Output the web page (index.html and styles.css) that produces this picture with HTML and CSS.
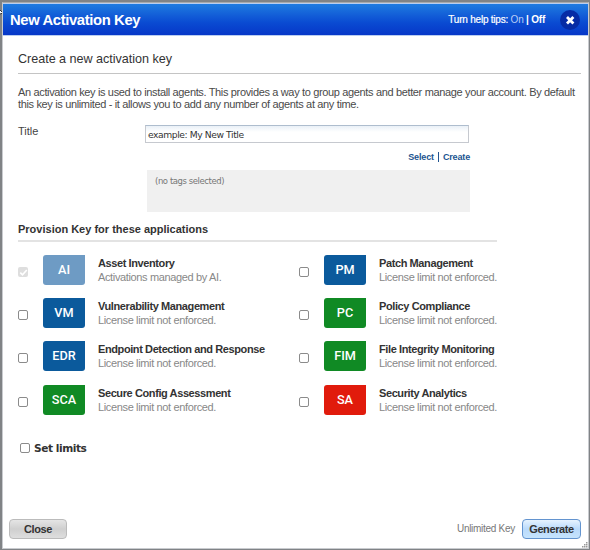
FILE: index.html
```
<!DOCTYPE html>
<html lang="en">
<head>
<meta charset="utf-8">
<title>New Activation Key</title>
<link rel="stylesheet" href="styles.css">
</head>
<body>
<svg class="cursor" width="4" height="12" viewBox="0 0 4 12"><path d="M0 2L3 5L0 6" fill="#fff" stroke="#333" stroke-width="1"/></svg>
<main class="dialog">
  <header class="bar">
    <h1>New Activation Key</h1>
    <div class="tips"><span class="tips-label">Turn help tips:</span> <span class="on">On</span> <b>|</b> <b>Off</b></div>
    <svg class="x" width="20" height="20" viewBox="0 0 20 20"><circle cx="10" cy="10" r="10" fill="#062ba5"/><path d="M7 7L13.4 13.4M13.4 7L7 13.4" stroke="#fff" stroke-width="2.8"/></svg>
  </header>
  <section class="content">
    <h2>Create a new activation key</h2>
    <p class="intro">An activation key is used to install agents. This provides a way to group agents and better manage your account. By default<br>this key is unlimited - it allows you to add any number of agents at any time.</p>
    <div class="field">
      <label>Title</label>
      <div class="controls">
        <div class="input">example: My New Title</div>
        <div class="links"><span>Select</span><i></i><span>Create</span></div>
        <div class="tags">(no tags selected)</div>
      </div>
    </div>
    <h3>Provision Key for these applications</h3>
    <div class="apps">
      <div class="app"><span class="box off"><svg width="11" height="11" viewBox="0 0 11 11"><path d="M2.3 5.6L4.5 7.8L8.8 3" fill="none" stroke="#fff" stroke-width="1.6"/></svg></span><span class="badge pale">AI</span><div><b>Asset Inventory</b><p>Activations managed by AI.</p></div></div>
      <div class="app"><span class="box"></span><span class="badge">PM</span><div><b>Patch Management</b><p>License limit not enforced.</p></div></div>
      <div class="app"><span class="box"></span><span class="badge">VM</span><div><b>Vulnerability Management</b><p>License limit not enforced.</p></div></div>
      <div class="app"><span class="box"></span><span class="badge green">PC</span><div><b>Policy Compliance</b><p>License limit not enforced.</p></div></div>
      <div class="app"><span class="box"></span><span class="badge">EDR</span><div><b>Endpoint Detection and Response</b><p>License limit not enforced.</p></div></div>
      <div class="app"><span class="box"></span><span class="badge green">FIM</span><div><b>File Integrity Monitoring</b><p>License limit not enforced.</p></div></div>
      <div class="app"><span class="box"></span><span class="badge green">SCA</span><div><b>Secure Config Assessment</b><p>License limit not enforced.</p></div></div>
      <div class="app"><span class="box"></span><span class="badge red">SA</span><div><b>Security Analytics</b><p>License limit not enforced.</p></div></div>
    </div>
    <div class="limits"><span class="box"></span><b>Set limits</b></div>
  </section>
  <footer>
    <span class="btn">Close</span>
    <span class="note">Unlimited Key</span>
    <span class="btn primary">Generate</span>
  </footer>
  <svg class="grip" width="6" height="6" viewBox="0 0 6 6" fill="#999"><path d="M4 0h1.5v1.5H4zM2 2h1.5v1.5H2zM4 2h1.5v1.5H4zM0 4h1.5v1.5H0zM2 4h1.5v1.5H2zM4 4h1.5v1.5H4z"/></svg>
</main>
</body>
</html>
```
FILE: styles.css
```
* { box-sizing: border-box; }
body { margin: 0; width: 590px; height: 550px; padding: 2px 1px 1px 2px; background: #808386; font-family: "Liberation Sans", Arial, sans-serif; color: #444; overflow: hidden; }
h1, h2, h3, p { margin: 0; white-space: nowrap; }
.cursor { position: absolute; left: 0; top: 8px; }
.dialog { position: relative; display: flex; flex-direction: column; width: 587px; height: 547px; background: #fff; border: 1px solid #c9cbcf; border-top-color: #aaa; }
.bar { display: flex; align-items: center; height: 33px; padding: 0 8px 0 7px; background: linear-gradient(#1f7be0, #0a4bd2 60%, #0637c8); border: 1px solid #b9cdf0; border-width: 1px 0; color: #fff; }
h1 { font-size: 14.8px; line-height: 18px; letter-spacing: -.37px; }
.tips { margin-left: auto; margin-right: 15px; font-size: 10px; letter-spacing: -.22px; white-space: nowrap; }
.tips-label { -webkit-text-stroke: .2px #fff; }
.on { color: #b9cdf5; }
.content { flex: 1; padding: 0 7px 0 15px; }
h2 { height: 38px; padding-top: 16px; border-bottom: 1px solid #c4c4c4; font-size: 12.6px; line-height: 15px; letter-spacing: -.03px; font-weight: normal; color: #333; }
.intro { padding-top: 12px; height: 51px; font-size: 11px; line-height: 12px; letter-spacing: -.35px; color: #4a4a4a; }
.field { display: flex; height: 97px; }
.field label { width: 127px; font-size: 11px; line-height: 13px; }
.controls { width: 325px; }
.input { height: 18px; width: 324px; border: 1px solid #c6c9cf; border-top-color: #aebdce; background: linear-gradient(#eaf0f7, #fff 6px); padding-left: 2px; font: 9.2px/17px "DejaVu Sans", Verdana, sans-serif; letter-spacing: -.42px; color: #333; }
.links { display: flex; justify-content: flex-end; align-items: center; height: 27px; padding-top: 1px; gap: 4px; font-size: 9px; letter-spacing: -.15px; font-weight: bold; color: #215490; }
.links i { width: 1px; height: 10px; background: #215490; }
.tags { height: 42px; margin-left: 2px; background: #f0f0f0; padding: 5px 8px; font: 8.5px/12px "DejaVu Sans", Verdana, sans-serif; color: #777; letter-spacing: -.43px; }
h3 { width: 479px; height: 20px; border-bottom: 2px solid #e3e3e3; font-size: 11px; line-height: 15px; color: #333; }
.apps { display: grid; grid-template-columns: 281px 281px; grid-auto-rows: 43.2px; padding-top: 13px; }
.app { display: flex; height: 30px; font-size: 11px; letter-spacing: -.36px; white-space: nowrap; }
.app > div { margin-left: 13px; padding-top: 1px; }
.app b { display: block; line-height: 14px; letter-spacing: -.4px; color: #333; }
.app p { line-height: 14px; color: #888; }
.box { width: 10px; height: 10px; margin: 12px 15px 0 0; border: 1px solid #8b8b8b; border-radius: 2px; background: #fff; flex: none; }
.box.off { background: #dedede; border: 0; }
.box svg { display: block; }
.badge { width: 42px; height: 30px; border-radius: 3px 0 3px 3px; background: #0b5a9c; color: #fff; font: 500 12.7px/30px Roboto, sans-serif; letter-spacing: 0; text-align: center; flex: none; }
.pale { background: #6e9bc4; }
.green { background: #108a24; }
.red { background: #e11b0c; }
.limits { display: flex; align-items: center; margin-top: 13px; padding-left: 2px; height: 14px; font: bold 10.6px/14px "DejaVu Sans", Verdana, sans-serif; letter-spacing: -.45px; color: #333; }
.limits .box { margin: 0 4px 0 0; }
footer { display: flex; align-items: center; height: 39px; padding: 0 7px 0 6px; }
.btn { width: 58px; height: 20px; border: 1px solid #bbb; border-radius: 4px; background: linear-gradient(#e5e5e5, #cfcfcf 50%, #dedede); font-size: 11px; letter-spacing: -.4px; font-weight: bold; line-height: 18px; text-align: center; color: #333; }
.primary { width: 59px; border: 1px solid #6394cf; background: linear-gradient(#e6f3ff, #b9dafb 50%, #c6e4fd); }
.note { margin-left: auto; margin-right: 7px; font-size: 10px; letter-spacing: -.28px; color: #777; }
.grip { position: absolute; right: 0; bottom: 0; }
```
